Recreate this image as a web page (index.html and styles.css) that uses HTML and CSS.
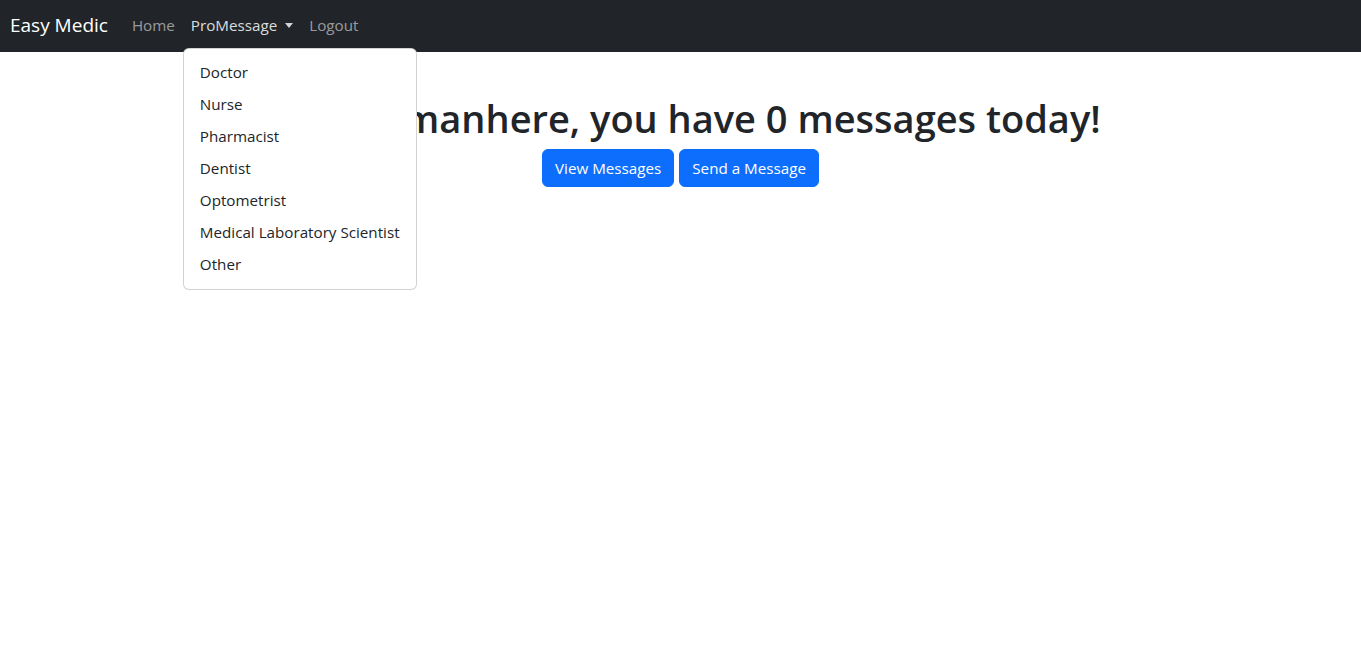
FILE: index.html
```html
<!DOCTYPE html>
<html lang="en">
<head>
<meta charset="utf-8">
<title>Easy Medic</title>
<link rel="stylesheet" href="styles.css">
</head>
<body>
<nav class="navbar">
  <div class="navbar-inner">
    <a class="brand" href="#">Easy Medic</a>
    <ul class="nav">
      <li class="nav-item"><a class="nav-link" href="#">Home</a></li>
      <li class="nav-item dropdown">
        <a class="nav-link nav-link-open" href="#">ProMessage<span class="caret"></span></a>
        <ul class="dropdown-menu">
          <li><a class="dropdown-item" href="#">Doctor</a></li>
          <li><a class="dropdown-item" href="#">Nurse</a></li>
          <li><a class="dropdown-item" href="#">Pharmacist</a></li>
          <li><a class="dropdown-item" href="#">Dentist</a></li>
          <li><a class="dropdown-item" href="#">Optometrist</a></li>
          <li><a class="dropdown-item" href="#">Medical Laboratory Scientist</a></li>
          <li><a class="dropdown-item" href="#">Other</a></li>
        </ul>
      </li>
      <li class="nav-item"><a class="nav-link" href="#">Logout</a></li>
    </ul>
  </div>
</nav>
<main class="hero">
  <h1 class="hero-title">Hey Batmanhere, you have 0 messages today!</h1>
  <div class="hero-actions">
    <a class="btn" href="#">View Messages</a>
    <a class="btn" href="#">Send a Message</a>
  </div>
</main>
</body>
</html>
```

FILE: styles.css
```css
* { box-sizing: border-box; }
html {
  height: 100%;
}
html, body {
  margin: 0;
  padding: 0;
  background: #fff;
  font-family: "Open Sans", "Noto Sans", "Liberation Sans", sans-serif;
  font-size: 15.2px;
  line-height: 24px;
  color: #212529;
}
body {
  min-height: 100%;
}
a { text-decoration: none; }

.navbar {
  position: relative;
  z-index: 10;
  background: #212529;
  height: 52px;
}
.navbar-inner {
  display: flex;
  align-items: center;
  height: 100%;
  padding: 0 10px 2px;
}
.brand {
  color: #fff;
  font-size: 19px;
  line-height: 30px;
  margin-right: 16px;
}
.nav {
  display: flex;
  list-style: none;
  margin: 0;
  padding: 0;
}
.nav-item { position: relative; }
.nav-link {
  display: flex;
  align-items: center;
  padding: 8px;
  line-height: 24px;
  color: rgba(255,255,255,.55);
}
.nav-link-open { color: rgba(255,255,255,.85); }
.caret {
  display: inline-block;
  margin-left: 8px;
  width: 0;
  height: 0;
  border-top: 5px solid rgba(255,255,255,.8);
  border-left: 4.5px solid transparent;
  border-right: 4.5px solid transparent;
}
.dropdown-menu {
  position: absolute;
  top: 43px;
  left: 0;
  z-index: 20;
  list-style: none;
  margin: 0;
  padding: 8px 0;
  background: #fff;
  border: 1px solid rgba(0,0,0,.175);
  border-radius: 6px;
  white-space: nowrap;
  min-width: 160px;
}
.dropdown-item {
  display: block;
  padding: 3px 16px 5px;
  line-height: 24px;
  color: #212529;
}

.hero {
  text-align: center;
  padding-top: 42px;
}
.hero-title {
  margin: 0 0 7px;
  font-size: 38px;
  font-weight: 600;
  line-height: 48px;
}
.hero-actions {
  display: flex;
  justify-content: center;
  gap: 5px;
}
.btn {
  display: inline-block;
  padding: 6px 12px;
  line-height: 24px;
  font-size: 15.2px;
  color: #fff;
  background: #0d6efd;
  border: 1px solid #0d6efd;
  border-radius: 6px;
}
```
